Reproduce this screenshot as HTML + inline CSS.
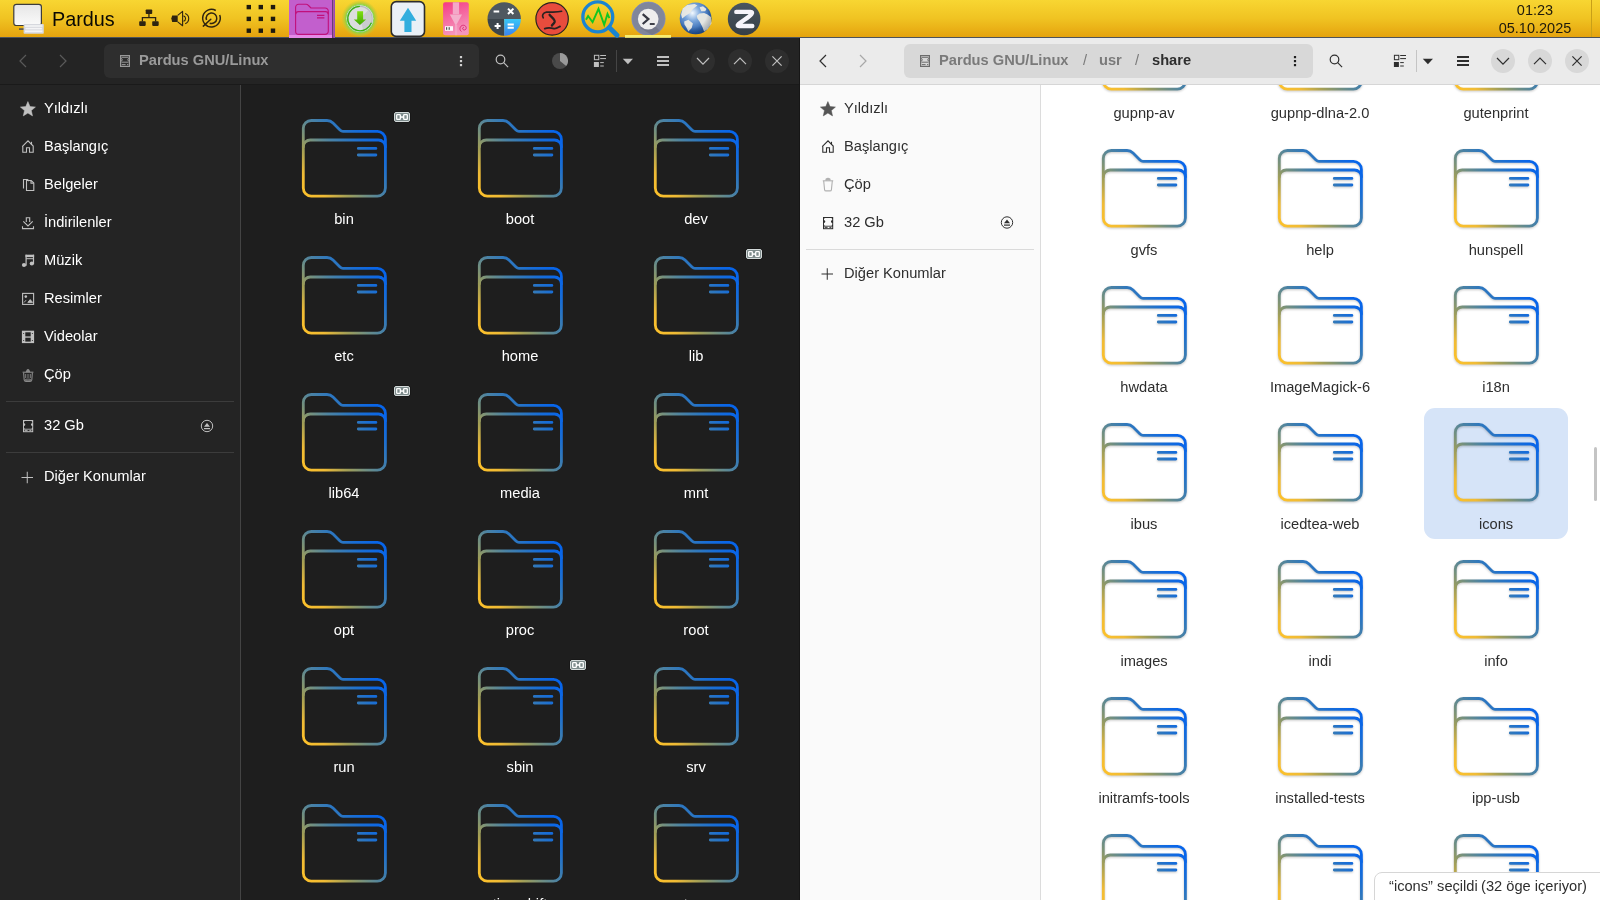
<!DOCTYPE html><html><head><meta charset="utf-8"><style>
*{box-sizing:border-box;margin:0;padding:0}
html,body{width:1600px;height:900px;overflow:hidden;font-family:"Liberation Sans",sans-serif;background:#1e1e1e;position:relative}
div,svg{position:absolute}
.t{white-space:nowrap;font-size:14.67px;line-height:18px;will-change:transform}
.lbl{width:170px;text-align:center;white-space:nowrap;font-size:14.67px;line-height:18px;will-change:transform}
.fold{width:84px;height:79px;overflow:visible}
</style></head><body>
<svg width="0" height="0" style="left:0;top:0">
<defs>
<linearGradient id="gd" gradientUnits="userSpaceOnUse" x1="0" y1="79" x2="84" y2="0">
<stop offset="0" stop-color="#ffc228"/>
<stop offset="0.15" stop-color="#f0bb35"/>
<stop offset="0.3" stop-color="#a09e58"/>
<stop offset="0.42" stop-color="#6e8e84"/>
<stop offset="0.52" stop-color="#4a82a4"/>
<stop offset="0.62" stop-color="#3078bc"/>
<stop offset="0.72" stop-color="#1a6ed4"/>
<stop offset="0.85" stop-color="#0a66e8"/>
<stop offset="1" stop-color="#0062f0"/>
</linearGradient>
<symbol id="fd" viewBox="0 0 84 79" overflow="visible">
<g fill="none" stroke="url(#gd)" stroke-width="2.8" stroke-linecap="round" stroke-linejoin="round">
<path d="M1.3 9.5A8 8 0 0 1 9.3 1.5H25C27.5 1.5 29.5 2.5 31 4L38 11C39 12 39.5 12.4 41 12.4H75.4A8 8 0 0 1 83.4 20.4V69.1A8 8 0 0 1 75.4 77.1H9.3A8 8 0 0 1 1.3 69.1Z"/>
<path d="M1.3 28A7 7 0 0 1 8.3 21H76.4A7 7 0 0 1 83.4 28"/>
<path d="M56.3 29.4H73.9M56.3 36H73.9"/>
</g>
</symbol>
</defs></svg>
<div style="left:0px;top:0px;width:1600px;height:37px;background:linear-gradient(#f8d632,#f0c322 50%,#e5a30e)"></div>
<div style="left:0px;top:37px;width:1600px;height:1px;background:#4e535a"></div>
<svg style="left:0;top:0" width="800" height="38" viewBox="0 0 800 38">
<defs>
<linearGradient id="mon" x1="0" y1="0" x2="0" y2="1"><stop offset="0" stop-color="#e6e6e6"/><stop offset="1" stop-color="#fafafa"/></linearGradient>
<radialGradient id="glow"><stop offset="0.74" stop-color="#90d040" stop-opacity="1"/><stop offset="0.86" stop-color="#b4cc38" stop-opacity="0.7"/><stop offset="1" stop-color="#c8c830" stop-opacity="0"/></radialGradient><linearGradient id="ga" x1="0" y1="0" x2="0" y2="1"><stop offset="0" stop-color="#80e010"/><stop offset="1" stop-color="#44a808"/></linearGradient>
<linearGradient id="pk" x1="0" y1="0" x2="0.3" y2="1"><stop offset="0" stop-color="#f43a84"/><stop offset="1" stop-color="#f596bc"/></linearGradient>
<radialGradient id="gl" cx="0.4" cy="0.33" r="0.72"><stop offset="0" stop-color="#f4faff"/><stop offset="0.35" stop-color="#7aa6dc"/><stop offset="0.75" stop-color="#3468b0"/><stop offset="1" stop-color="#1c4a8e"/></radialGradient><radialGradient id="gs" cx="0.4" cy="0.33" r="0.75"><stop offset="0.6" stop-color="#000" stop-opacity="0"/><stop offset="1" stop-color="#0a2a60" stop-opacity="0.35"/></radialGradient><linearGradient id="zg" x1="0" y1="0" x2="0" y2="1"><stop offset="0" stop-color="#4a5660"/><stop offset="1" stop-color="#363e46"/></linearGradient>
<linearGradient id="cb" x1="0" y1="0" x2="0" y2="1"><stop offset="0" stop-color="#38c8f8"/><stop offset="1" stop-color="#3a80f0"/></linearGradient>
</defs>
<!-- computer -->
<rect x="13.8" y="4.3" width="27.6" height="21.2" rx="2.5" fill="url(#mon)" stroke="#3c3c3c" stroke-width="1.2"/>
<rect x="19" y="28.3" width="5" height="1.6" fill="#555"/>
<rect x="23.6" y="24" width="20.2" height="9.8" rx="0.8" fill="#d6d8de"/>
<g fill="#f4f4f6"><rect x="25" y="25.2" width="17.4" height="1.6"/><rect x="25.5" y="27.8" width="16.4" height="1.6"/><rect x="25" y="30.4" width="17.4" height="1.8"/></g>
<!-- network -->
<g fill="#2e2410">
<rect x="145.7" y="9.5" width="6.5" height="4.6" rx="0.8"/>
<rect x="139.2" y="21.3" width="6.5" height="4.6" rx="0.8"/>
<rect x="152.2" y="21.3" width="6.5" height="4.6" rx="0.8"/>
</g>
<path d="M148.95 14V17.5M142.4 21.5V17.6H155.6V21.5" fill="none" stroke="#2e2410" stroke-width="1.3"/>
<!-- volume -->
<path d="M171.3 18.6L172.2 15.4H177.7V21.9H172.2Z" fill="#2e2410"/>
<path d="M177.7 15.4L182.6 11.3V25.7L177.7 21.9" fill="none" stroke="#2e2410" stroke-width="1.1" stroke-linejoin="round"/>
<path d="M183.5 15.9A2.8 2.8 0 0 1 183.5 21.3M185.2 13.4A5.6 5.6 0 0 1 185.2 23.8" fill="none" stroke="#2e2410" stroke-width="1.1"/>
<!-- idle/sync icon -->
<path d="M219.7 15.05A8.8 8.8 0 1 1 215.77 10.5" fill="none" stroke="#2e2410" stroke-width="1.5"/>
<path d="M206.52 20.01A5.3 5.3 0 1 1 209.69 23.18" fill="none" stroke="#2e2410" stroke-width="1.5"/>
<path d="M203.3 26.1L210.8 19.2" fill="none" stroke="#2e2410" stroke-width="1.5" stroke-linecap="round"/>
<!-- grid -->
<g fill="#1e1a0e">
<rect x="246.6" y="4.9" width="4.4" height="4.4"/><rect x="258.6" y="4.9" width="4.4" height="4.4"/><rect x="270.8" y="4.9" width="4.4" height="4.4"/>
<rect x="246.6" y="16.7" width="4.4" height="4.4"/><rect x="258.6" y="16.7" width="4.4" height="4.4"/><rect x="270.8" y="16.7" width="4.4" height="4.4"/>
<rect x="246.6" y="28.5" width="4.4" height="4.4"/><rect x="258.6" y="28.5" width="4.4" height="4.4"/><rect x="270.8" y="28.5" width="4.4" height="4.4"/>
</g>
<!-- active files app -->
<rect x="289" y="0" width="43" height="38" fill="#c25fcd"/>
<rect x="289" y="35" width="43" height="3" fill="#e58ae8"/>
<rect x="332" y="0" width="1.2" height="38" fill="#6a3a78"/>
<rect x="333.2" y="0" width="1.8" height="38" fill="#9a48b8"/>
<g fill="none" stroke="#c0107c" stroke-width="1.1" stroke-linejoin="round">
<path d="M295.6 7.5A3.2 3.2 0 0 1 298.8 4.3H306C307.2 4.3 307.8 4.8 308.5 5.5L311 8H325A3.2 3.2 0 0 1 328.3 11.2V31.2A3.2 3.2 0 0 1 325 34.4H298.8A3.2 3.2 0 0 1 295.6 31.2Z"/>
<path d="M295.6 14.2A2.8 2.8 0 0 1 298.4 11.6H325.4A2.8 2.8 0 0 1 328.3 14.2" stroke-width="1.3"/>
<path d="M317 15.4H324.4M317 17.9H324.4" stroke-width="1.1"/>
</g>
<!-- green download -->
<circle cx="359.9" cy="18.6" r="18.6" fill="url(#glow)"/>
<circle cx="359.9" cy="18.6" r="14" fill="#dcdde0" stroke="#7cd83a" stroke-width="0.8"/>
<clipPath id="dc"><circle cx="359.9" cy="18.6" r="11.6"/></clipPath><path clip-path="url(#dc)" d="M359.9 18.6L370.5 8L380 28L365 36Z" fill="#c6c8cc" opacity="0.8"/>
<circle cx="359.9" cy="18.6" r="12.2" fill="none" stroke="#b8babe" stroke-width="1.1"/>
<path d="M359.9 6.4A12.2 12.2 0 1 0 371.4 22.8" fill="none" stroke="#3cb414" stroke-width="1.3"/>
<path d="M357.2 11.2H363.1V19.4H366.1L359.9 24.9L353.8 19.4H357.2Z" fill="url(#ga)"/>
<!-- up arrow box -->
<rect x="391.3" y="1.6" width="33.2" height="34.8" rx="5" fill="#eaf0f6" stroke="#2c2c2c" stroke-width="1.6"/>
<path d="M408 7.8L416.2 20.8H411.5V32H404.4V20.8H399.8Z" fill="#32aede"/>
<!-- pink package -->
<rect x="443.1" y="2.3" width="25.7" height="32.9" rx="2" fill="url(#pk)"/>
<rect x="452.8" y="2.3" width="6.3" height="12" fill="#f4a8c8"/>
<path d="M449.8 14.6H462L455.9 25.7Z" fill="#f4b0cc"/>
<rect x="455" y="25" width="2.3" height="10.2" fill="#f4a8c8" opacity="0.8"/>
<rect x="445" y="26.2" width="8" height="4.6" fill="#fafafa"/>
<g fill="#555"><rect x="446" y="27.2" width="1.2" height="2.6"/><rect x="448.6" y="27.2" width="1.2" height="2.6"/></g>
<path d="M461.5 31.5C459.5 30.5 459.3 27 461.8 25.6C464 24.5 466.5 26 466.2 28.3C466 30 464 30.5 463 29.5C462 28.5 463 27 464 27.6" fill="none" stroke="#d4186a" stroke-width="0.8"/>
<!-- calculator -->
<clipPath id="cc"><circle cx="504.2" cy="19" r="16.7"/></clipPath>
<g clip-path="url(#cc)">
<rect x="487" y="2" width="35" height="17" fill="#4f5860"/>
<rect x="487" y="19" width="17.2" height="17" fill="#3c454c"/>
<rect x="504.2" y="19" width="17.8" height="17" fill="url(#cb)"/>
</g>
<g stroke="#fff" stroke-width="2" fill="none">
<path d="M493.6 11.5H499.2M508 8.6L513.4 14M513.4 8.6L508 14M494.6 26.1H500.6M497.6 23.1V29.1M507.6 24.4H513.8M507.6 27.8H513.8"/>
</g>
<!-- red T -->
<circle cx="552.1" cy="18.9" r="16.2" fill="#e84c3d" stroke="#2a2220" stroke-width="1.2"/>
<g fill="none" stroke="#2a2220" stroke-linecap="round">
<path d="M543.2 17.8C541.6 15.5 543 12.8 546.5 12.2C551 11.7 556.5 12.6 561.6 11.3" stroke-width="1.7"/>
<path d="M549.6 14.8C551 17 555.5 19.5 554.6 22C554 23.5 552.6 24.5 551.9 25.5" stroke-width="2.3"/>
<path d="M544.8 28.6C548 27.4 551 27.8 554 28.6C556 29 558 27.6 560 26.4" stroke-width="1.9"/>
</g>
<!-- magnifier -->
<circle cx="597.8" cy="16.9" r="14.95" fill="none" stroke="#1a84d2" stroke-width="3.3"/>
<path d="M609.5 27.8L617 35.3" stroke="#1a84d2" stroke-width="4.8" stroke-linecap="round"/>
<path d="M586 19.8L588.1 16L592.6 22.2L598.5 8.9L604.2 24.7L607.5 13.9L609.4 18.1" fill="none" stroke="#12c622" stroke-width="1.9" stroke-linejoin="miter"/>
<!-- terminal -->
<circle cx="648.5" cy="18.7" r="16.6" fill="#80869a" stroke="#7886c4" stroke-width="0.8"/>
<path d="M648.2 19.1L660 31L652 35L640 28Z" fill="#6c7080" opacity="0.6"/>
<circle cx="648.2" cy="19.1" r="10.3" fill="#eeeeee"/>
<path d="M642.7 14.2L648.4 19.1L642.7 24" fill="none" stroke="#363842" stroke-width="2.2"/>
<path d="M649.8 24H654.7" stroke="#363842" stroke-width="1.9"/>
<rect x="625" y="35" width="46" height="2.8" fill="#f8ee70"/>
<!-- globe -->
<circle cx="695.6" cy="18.4" r="15.9" fill="url(#gl)"/>
<g fill="#ecebe4" opacity="0.95"><polygon points="681.1,14.6 682.7,8.4 687.2,5.1 694.6,3.9 697.4,5.6 692.9,9.0 690.1,12.9 685.6,15.7 682.2,18.6"/><polygon points="684.2,21.4 688.4,19.7 692.9,23.6 691.7,28.1 688.4,31.5 686.1,27.0 684.4,24.2"/><polygon points="696.8,15.7 699.6,13.5 704.1,12.9 707.5,14.6 710.9,16.9 711.4,23.6 707.5,29.2 704.1,31.5 702.4,27.0 699.6,21.4 697.4,18.6"/><polygon points="699.6,7.3 703.0,6.2 706.4,9.0 705.2,11.2 701.3,11.2"/></g>
<circle cx="695.6" cy="18.4" r="15.9" fill="url(#gs)"/>
<!-- Z -->
<circle cx="744.1" cy="19" r="16.3" fill="url(#zg)"/>
<path d="M736.3 11.9H750.5Q753 11.9 751.5 14C749 17.5 742.5 20.5 738.5 24.2Q736.6 26 739.2 26H752.3" fill="none" stroke="#f6f4fa" stroke-width="4.4" stroke-linecap="round" stroke-linejoin="round"/>
</svg>
<div class="t" style="left:52px;top:6.6px;font-size:19.8px;line-height:24px;color:#0a0804">Pardus</div>
<div class="t" style="left:1485px;width:100px;text-align:center;top:1px;font-size:14.5px;line-height:18px;color:#1e1a0c">01:23</div>
<div class="t" style="left:1485px;width:100px;text-align:center;top:19px;font-size:14.5px;line-height:18px;color:#1e1a0c">05.10.2025</div>
<div style="left:1591px;top:0px;width:1px;height:37px;background:#c8a018"></div>
<div style="left:0px;top:38px;width:800px;height:46px;background:#242424"></div>
<div style="left:0px;top:84px;width:800px;height:1px;background:#1a1a1a"></div>
<div style="left:0px;top:85px;width:240px;height:815px;background:#242424"></div>
<div style="left:240px;top:85px;width:1px;height:815px;background:#444444"></div>
<div style="left:241px;top:85px;width:559px;height:815px;background:#1e1e1e"></div>
<div style="left:104px;top:44px;width:375px;height:34px;background:#2e2e2e;border-radius:6px"></div>
<div class="t" style="left:139px;top:51.0px;line-height:18px;font-weight:bold;color:#9a9a9a">Pardus GNU/Linux</div>
<div class="t" style="left:44px;top:99.0px;line-height:18px;color:#ffffff">Yıldızlı</div>
<div class="t" style="left:44px;top:137.0px;line-height:18px;color:#ffffff">Başlangıç</div>
<div class="t" style="left:44px;top:175.0px;line-height:18px;color:#ffffff">Belgeler</div>
<div class="t" style="left:44px;top:213.0px;line-height:18px;color:#ffffff">İndirilenler</div>
<div class="t" style="left:44px;top:251.0px;line-height:18px;color:#ffffff">Müzik</div>
<div class="t" style="left:44px;top:289.0px;line-height:18px;color:#ffffff">Resimler</div>
<div class="t" style="left:44px;top:327.0px;line-height:18px;color:#ffffff">Videolar</div>
<div class="t" style="left:44px;top:365.0px;line-height:18px;color:#ffffff">Çöp</div>
<div style="left:6px;top:401px;width:228px;height:1px;background:#3c3c3c"></div>
<div class="t" style="left:44px;top:416.0px;line-height:18px;color:#ffffff">32 Gb</div>
<div style="left:6px;top:452px;width:228px;height:1px;background:#3c3c3c"></div>
<div class="t" style="left:44px;top:467.0px;line-height:18px;color:#ffffff">Diğer Konumlar</div>
<div style="left:800px;top:38px;width:800px;height:46px;background:#ebebeb"></div>
<div style="left:800px;top:84px;width:800px;height:1px;background:#d6d6d6"></div>
<div style="left:800px;top:85px;width:240px;height:815px;background:#fafafa"></div>
<div style="left:1040px;top:85px;width:1px;height:815px;background:#dcdcdc"></div>
<div style="left:1041px;top:85px;width:559px;height:815px;background:#ffffff"></div>
<div style="left:904px;top:44px;width:409px;height:34px;background:#d8d8d8;border-radius:6px"></div>
<div class="t" style="left:939px;top:51.0px;line-height:18px;font-weight:bold;color:#7a7a7a">Pardus GNU/Linux</div>
<div class="t" style="left:844px;top:99.0px;line-height:18px;color:#2e2e2e">Yıldızlı</div>
<div class="t" style="left:844px;top:137.0px;line-height:18px;color:#2e2e2e">Başlangıç</div>
<div class="t" style="left:844px;top:175.0px;line-height:18px;color:#2e2e2e">Çöp</div>
<div class="t" style="left:844px;top:213.0px;line-height:18px;color:#2e2e2e">32 Gb</div>
<div class="t" style="left:1083px;top:51.0px;line-height:18px;color:#7a7a7a">/</div>
<div class="t" style="left:1099px;top:51.0px;line-height:18px;color:#7a7a7a;font-weight:bold">usr</div>
<div class="t" style="left:1135px;top:51.0px;line-height:18px;color:#7a7a7a">/</div>
<div class="t" style="left:1152px;top:51.0px;line-height:18px;color:#2e2e2e;font-weight:bold">share</div>
<div style="left:806px;top:249px;width:228px;height:1px;background:#dadada"></div>
<div class="t" style="left:844px;top:264.0px;line-height:18px;color:#2e2e2e">Diğer Konumlar</div>
<svg style="left:0px;top:0" width="800" height="900" viewBox="0 0 800 900"><path d="M26 55L20 61L26 67" fill="none" stroke="#5a5a5a" stroke-width="1.2"/><path d="M60 55L66 61L60 67" fill="none" stroke="#5a5a5a" stroke-width="1.2"/><g transform="translate(120,55)"><rect x="0.6" y="0.6" width="8.8" height="10.8" fill="none" stroke="#9a9a9a" stroke-width="1.2"/><path d="M1.5 2.3H8.5M1.5 7.2H8.5" stroke="#9a9a9a" stroke-width="1"/><path d="M1 3.5A1.2 1.2 0 0 1 1 6M9 3.5A1.2 1.2 0 0 0 9 6" fill="none" stroke="#9a9a9a" stroke-width="1"/><path d="M1.8 9.6H5.6M7 9.6H8.3" stroke="#9a9a9a" stroke-width="1"/></g><rect x="459.9" y="56.0" width="2.2" height="2.2" fill="#d0d0d0"/><rect x="459.9" y="60.0" width="2.2" height="2.2" fill="#d0d0d0"/><rect x="459.9" y="63.99999999999999" width="2.2" height="2.2" fill="#d0d0d0"/><circle cx="500.5" cy="59.5" r="4.3" fill="none" stroke="#c0c0c0" stroke-width="1.2"/><path d="M503.7 62.7L508.1 67.1" stroke="#c0c0c0" stroke-width="1.2"/><circle cx="560" cy="61" r="8" fill="#4a4a4a"/><path d="M560 61V53A8 8 0 0 1 566.2 66Z" fill="#9a9a9a"/><rect x="594.4" y="55.3" width="4.4" height="4.4" fill="none" stroke="#c0c0c0" stroke-width="1"/><rect x="593.9" y="62" width="5" height="5" fill="#c0c0c0"/><path d="M600.2 55.5H606M600.2 58.6H606M600.2 62.6H603.8M600.2 66H603.8" stroke="#c0c0c0" stroke-width="1"/><rect x="616" y="50" width="1" height="22" fill="#454545"/><path d="M622.8 58.8H633L627.9 64.3Z" fill="#c0c0c0"/><path d="M657 57H669M657 61H669M657 65H669" stroke="#c0c0c0" stroke-width="2"/><circle cx="703" cy="61" r="12" fill="#2e2e2e"/><circle cx="740" cy="61" r="12" fill="#2e2e2e"/><circle cx="777" cy="61" r="12" fill="#2e2e2e"/><path d="M697 58L703 64.2L709 58" fill="none" stroke="#c0c0c0" stroke-width="1.2"/><path d="M734 64.2L740 58L746 64.2" fill="none" stroke="#c0c0c0" stroke-width="1.2"/><path d="M772.4 56.4L781.6 65.6M781.6 56.4L772.4 65.6" fill="none" stroke="#c0c0c0" stroke-width="1.2"/><polygon points="27.90,101.60 30.02,106.59 35.41,107.06 31.32,110.61 32.54,115.89 27.90,113.10 23.26,115.89 24.48,110.61 20.39,107.06 25.78,106.59" fill="#c0c0c0" stroke="#c0c0c0" stroke-width="0.5" stroke-linejoin="round"/><g fill="none" stroke="#c0c0c0" stroke-width="1.1" transform="translate(21.5,140)"><path d="M0.7 6.6L6.5 0.8L11.7 6V12.2H8V7.8H5V12.2H1.3V6.6"/><path d="M10 1.8V4.8"/></g><g fill="none" stroke="#c0c0c0" stroke-width="1.1"><path d="M23.5 188.5V179.5H27.5L29 181"/><path d="M26.5 190.5V180.5H31.2L33.8 183.1V190.5Z"/><path d="M31 180.8V183.3H33.6" /></g><g fill="none" stroke="#c0c0c0" stroke-width="1.1"><path d="M26.3 222V217.7H29.7V222"/><path d="M23.3 221.3L28 226L32.7 221.3"/><path d="M22.5 226.2V228.6H33.5V226.2"/></g><g fill="#c0c0c0"><rect x="25.5" y="254.7" width="8.6" height="2.4"/><rect x="25.5" y="254.7" width="1.2" height="11"/><rect x="32.9" y="254.7" width="1.2" height="9.5"/><rect x="26" y="258.2" width="7.5" height="1"/><circle cx="24" cy="265" r="2.1"/><circle cx="31.8" cy="263.5" r="2.1"/></g><g><rect x="22.6" y="293.4" width="11" height="11" fill="none" stroke="#c0c0c0" stroke-width="1.1"/><circle cx="25.8" cy="296.6" r="1.3" fill="#c0c0c0"/><path d="M24 302.5L26 300.2M27.8 302.4L30.2 299.6L32.6 302.4Z" fill="#c0c0c0" stroke="#c0c0c0" stroke-width="0.9"/></g><g><rect x="21.9" y="330.7" width="12.2" height="12.4" fill="#c0c0c0"/><rect x="25.3" y="332.3" width="5.4" height="4.1" fill="#242424"/><rect x="25.3" y="337.7" width="5.4" height="3.9" fill="#242424"/><g fill="#242424"><rect x="23.2" y="333" width="0.9" height="0.9"/><rect x="31.9" y="333" width="0.9" height="0.9"/><rect x="23.2" y="340" width="0.9" height="0.9"/><rect x="31.9" y="340" width="0.9" height="0.9"/></g></g><g fill="none" stroke="#8a8a8a" stroke-width="1.1"><path d="M22.6 372.2H33.4"/><path d="M26.4 371.6Q28 367.4 29.6 371.6Z" fill="#8a8a8a"/><path d="M23.6 372.6L24.2 380Q24.4 381.4 26 381.4H30Q31.6 381.4 31.8 380L32.4 372.6"/><path d="M25.7 374V378M28 374V378M30.3 374V378" stroke-width="0.9"/><ellipse cx="28" cy="380" rx="3" ry="0.9" stroke-width="0.9"/></g><g transform="translate(23,420)"><rect x="0" y="0" width="10.2" height="12.2" fill="#c0c0c0"/><path d="M2.2 1.1H8A1.2 1.2 0 0 1 9.2 2.3V3.3A1.3 1.3 0 0 0 9.2 5.9V7.5A1.2 1.2 0 0 1 8 8.7H2.2A1.2 1.2 0 0 1 1 7.5V5.9A1.3 1.3 0 0 0 1 3.3V2.3A1.2 1.2 0 0 1 2.2 1.1Z" fill="#242424"/><rect x="1" y="9.6" width="8.2" height="1.6" fill="#242424"/><path d="M1.6 10.4H4.6M6.4 10.4H8.4" stroke="#c0c0c0" stroke-width="0.9"/></g><circle cx="207" cy="426" r="5.7" fill="none" stroke="#c0c0c0" stroke-width="1"/><path d="M204 426.8L207 423L210 426.8Z" fill="#c0c0c0"/><rect x="204" y="428" width="6" height="1.2" fill="#c0c0c0"/><path d="M21.5 477.5H33M27.25 471.75V483.25" stroke="#c0c0c0" stroke-width="1"/></svg>
<svg style="left:800px;top:0" width="800" height="900" viewBox="0 0 800 900"><path d="M26 55L20 61L26 67" fill="none" stroke="#2e2e2e" stroke-width="1.2"/><path d="M60 55L66 61L60 67" fill="none" stroke="#a8a8a8" stroke-width="1.2"/><g transform="translate(120,55)"><rect x="0.6" y="0.6" width="8.8" height="10.8" fill="none" stroke="#6c6c6c" stroke-width="1.2"/><path d="M1.5 2.3H8.5M1.5 7.2H8.5" stroke="#6c6c6c" stroke-width="1"/><path d="M1 3.5A1.2 1.2 0 0 1 1 6M9 3.5A1.2 1.2 0 0 0 9 6" fill="none" stroke="#6c6c6c" stroke-width="1"/><path d="M1.8 9.6H5.6M7 9.6H8.3" stroke="#6c6c6c" stroke-width="1"/></g><rect x="493.9" y="56.0" width="2.2" height="2.2" fill="#1e1e1e"/><rect x="493.9" y="60.0" width="2.2" height="2.2" fill="#1e1e1e"/><rect x="493.9" y="63.99999999999999" width="2.2" height="2.2" fill="#1e1e1e"/><circle cx="534.5" cy="59.5" r="4.3" fill="none" stroke="#2e2e2e" stroke-width="1.2"/><path d="M537.7 62.7L542.1 67.1" stroke="#2e2e2e" stroke-width="1.2"/><rect x="594.4" y="55.3" width="4.4" height="4.4" fill="none" stroke="#2e2e2e" stroke-width="1"/><rect x="593.9" y="62" width="5" height="5" fill="#2e2e2e"/><path d="M600.2 55.5H606M600.2 58.6H606M600.2 62.6H603.8M600.2 66H603.8" stroke="#2e2e2e" stroke-width="1"/><rect x="616" y="50" width="1" height="22" fill="#c4c4c4"/><path d="M622.8 58.8H633L627.9 64.3Z" fill="#2e2e2e"/><path d="M657 57H669M657 61H669M657 65H669" stroke="#2e2e2e" stroke-width="2"/><circle cx="703" cy="61" r="12" fill="#d8d8d8"/><circle cx="740" cy="61" r="12" fill="#d8d8d8"/><circle cx="777" cy="61" r="12" fill="#d8d8d8"/><path d="M697 58L703 64.2L709 58" fill="none" stroke="#2e2e2e" stroke-width="1.2"/><path d="M734 64.2L740 58L746 64.2" fill="none" stroke="#2e2e2e" stroke-width="1.2"/><path d="M772.4 56.4L781.6 65.6M781.6 56.4L772.4 65.6" fill="none" stroke="#2e2e2e" stroke-width="1.2"/><polygon points="27.90,101.60 30.02,106.59 35.41,107.06 31.32,110.61 32.54,115.89 27.90,113.10 23.26,115.89 24.48,110.61 20.39,107.06 25.78,106.59" fill="#555555" stroke="#555555" stroke-width="0.5" stroke-linejoin="round"/><g fill="none" stroke="#2e2e2e" stroke-width="1.1" transform="translate(21.5,140)"><path d="M0.7 6.6L6.5 0.8L11.7 6V12.2H8V7.8H5V12.2H1.3V6.6"/><path d="M10 1.8V4.8"/></g><g fill="none" stroke="#b0b0b0" stroke-width="1.1" transform="translate(22,177.5)"><path d="M0.8 3.3H11.2"/><path d="M4 3V1.6Q6 0.2 8 1.6V3" fill="#b0b0b0"/><path d="M1.7 3.5L2.6 12.3Q2.8 13.4 4 13.4H8Q9.2 13.4 9.4 12.3L10.3 3.5"/></g><g transform="translate(23,217)"><rect x="0" y="0" width="10.2" height="12.2" fill="#2e2e2e"/><path d="M2.2 1.1H8A1.2 1.2 0 0 1 9.2 2.3V3.3A1.3 1.3 0 0 0 9.2 5.9V7.5A1.2 1.2 0 0 1 8 8.7H2.2A1.2 1.2 0 0 1 1 7.5V5.9A1.3 1.3 0 0 0 1 3.3V2.3A1.2 1.2 0 0 1 2.2 1.1Z" fill="#fafafa"/><rect x="1" y="9.6" width="8.2" height="1.6" fill="#fafafa"/><path d="M1.6 10.4H4.6M6.4 10.4H8.4" stroke="#2e2e2e" stroke-width="0.9"/></g><circle cx="207" cy="222.5" r="5.7" fill="none" stroke="#2e2e2e" stroke-width="1"/><path d="M204 223.3L207 219.5L210 223.3Z" fill="#2e2e2e"/><rect x="204" y="224.5" width="6" height="1.2" fill="#2e2e2e"/><path d="M21.5 274H33M27.25 268.25V279.75" stroke="#2e2e2e" stroke-width="1"/></svg>
<div style="left:241px;top:85px;width:559px;height:815px;overflow:hidden">
<svg style="left:153px;top:27px;overflow:visible" width="16" height="10" viewBox="0 0 16 10"><rect x="-0.5" y="-0.5" width="17" height="11" rx="2" fill="#000" opacity="0.35"/><rect x="0.5" y="0.5" width="15" height="9" rx="1.5" fill="#7e8c8c" stroke="#d4dada" stroke-width="1"/><rect x="2.7" y="2.6" width="3.6" height="4.8" rx="0.6" fill="none" stroke="#fff" stroke-width="1.3"/><rect x="9.7" y="2.6" width="3.6" height="4.8" rx="0.6" fill="none" stroke="#fff" stroke-width="1.3"/><rect x="6" y="4.3" width="4" height="1.5" fill="#fff"/></svg>
<svg style="left:505px;top:164px;overflow:visible" width="16" height="10" viewBox="0 0 16 10"><rect x="-0.5" y="-0.5" width="17" height="11" rx="2" fill="#000" opacity="0.35"/><rect x="0.5" y="0.5" width="15" height="9" rx="1.5" fill="#7e8c8c" stroke="#d4dada" stroke-width="1"/><rect x="2.7" y="2.6" width="3.6" height="4.8" rx="0.6" fill="none" stroke="#fff" stroke-width="1.3"/><rect x="9.7" y="2.6" width="3.6" height="4.8" rx="0.6" fill="none" stroke="#fff" stroke-width="1.3"/><rect x="6" y="4.3" width="4" height="1.5" fill="#fff"/></svg>
<svg style="left:153px;top:301px;overflow:visible" width="16" height="10" viewBox="0 0 16 10"><rect x="-0.5" y="-0.5" width="17" height="11" rx="2" fill="#000" opacity="0.35"/><rect x="0.5" y="0.5" width="15" height="9" rx="1.5" fill="#7e8c8c" stroke="#d4dada" stroke-width="1"/><rect x="2.7" y="2.6" width="3.6" height="4.8" rx="0.6" fill="none" stroke="#fff" stroke-width="1.3"/><rect x="9.7" y="2.6" width="3.6" height="4.8" rx="0.6" fill="none" stroke="#fff" stroke-width="1.3"/><rect x="6" y="4.3" width="4" height="1.5" fill="#fff"/></svg>
<svg style="left:329px;top:575px;overflow:visible" width="16" height="10" viewBox="0 0 16 10"><rect x="-0.5" y="-0.5" width="17" height="11" rx="2" fill="#000" opacity="0.35"/><rect x="0.5" y="0.5" width="15" height="9" rx="1.5" fill="#7e8c8c" stroke="#d4dada" stroke-width="1"/><rect x="2.7" y="2.6" width="3.6" height="4.8" rx="0.6" fill="none" stroke="#fff" stroke-width="1.3"/><rect x="9.7" y="2.6" width="3.6" height="4.8" rx="0.6" fill="none" stroke="#fff" stroke-width="1.3"/><rect x="6" y="4.3" width="4" height="1.5" fill="#fff"/></svg>
<svg class="fold" style="left:60.69999999999999px;top:34px;" viewBox="0 0 84 79"><use href="#fd"/></svg>
<div class="lbl" style="left:18px;top:125px;color:#fff">bin</div>
<svg class="fold" style="left:236.7px;top:34px;" viewBox="0 0 84 79"><use href="#fd"/></svg>
<div class="lbl" style="left:194px;top:125px;color:#fff">boot</div>
<svg class="fold" style="left:412.70000000000005px;top:34px;" viewBox="0 0 84 79"><use href="#fd"/></svg>
<div class="lbl" style="left:370px;top:125px;color:#fff">dev</div>
<svg class="fold" style="left:60.69999999999999px;top:171px;" viewBox="0 0 84 79"><use href="#fd"/></svg>
<div class="lbl" style="left:18px;top:262px;color:#fff">etc</div>
<svg class="fold" style="left:236.7px;top:171px;" viewBox="0 0 84 79"><use href="#fd"/></svg>
<div class="lbl" style="left:194px;top:262px;color:#fff">home</div>
<svg class="fold" style="left:412.70000000000005px;top:171px;" viewBox="0 0 84 79"><use href="#fd"/></svg>
<div class="lbl" style="left:370px;top:262px;color:#fff">lib</div>
<svg class="fold" style="left:60.69999999999999px;top:308px;" viewBox="0 0 84 79"><use href="#fd"/></svg>
<div class="lbl" style="left:18px;top:399px;color:#fff">lib64</div>
<svg class="fold" style="left:236.7px;top:308px;" viewBox="0 0 84 79"><use href="#fd"/></svg>
<div class="lbl" style="left:194px;top:399px;color:#fff">media</div>
<svg class="fold" style="left:412.70000000000005px;top:308px;" viewBox="0 0 84 79"><use href="#fd"/></svg>
<div class="lbl" style="left:370px;top:399px;color:#fff">mnt</div>
<svg class="fold" style="left:60.69999999999999px;top:445px;" viewBox="0 0 84 79"><use href="#fd"/></svg>
<div class="lbl" style="left:18px;top:536px;color:#fff">opt</div>
<svg class="fold" style="left:236.7px;top:445px;" viewBox="0 0 84 79"><use href="#fd"/></svg>
<div class="lbl" style="left:194px;top:536px;color:#fff">proc</div>
<svg class="fold" style="left:412.70000000000005px;top:445px;" viewBox="0 0 84 79"><use href="#fd"/></svg>
<div class="lbl" style="left:370px;top:536px;color:#fff">root</div>
<svg class="fold" style="left:60.69999999999999px;top:582px;" viewBox="0 0 84 79"><use href="#fd"/></svg>
<div class="lbl" style="left:18px;top:673px;color:#fff">run</div>
<svg class="fold" style="left:236.7px;top:582px;" viewBox="0 0 84 79"><use href="#fd"/></svg>
<div class="lbl" style="left:194px;top:673px;color:#fff">sbin</div>
<svg class="fold" style="left:412.70000000000005px;top:582px;" viewBox="0 0 84 79"><use href="#fd"/></svg>
<div class="lbl" style="left:370px;top:673px;color:#fff">srv</div>
<svg class="fold" style="left:60.69999999999999px;top:719px;" viewBox="0 0 84 79"><use href="#fd"/></svg>
<div class="lbl" style="left:18px;top:810px;color:#fff">sys</div>
<svg class="fold" style="left:236.7px;top:719px;" viewBox="0 0 84 79"><use href="#fd"/></svg>
<div class="lbl" style="left:194px;top:810px;color:#fff">timeshift</div>
<svg class="fold" style="left:412.70000000000005px;top:719px;" viewBox="0 0 84 79"><use href="#fd"/></svg>
<div class="lbl" style="left:370px;top:810px;color:#fff">tmp</div>
</div>
<div style="left:799px;top:38px;width:1px;height:862px;background:#161616"></div>
<div style="left:1041px;top:85px;width:559px;height:815px;overflow:hidden">
<svg class="fold" style="left:60.700000000000045px;top:-73px;filter:drop-shadow(0 1px 1px rgba(0,0,0,0.22));" viewBox="0 0 84 79"><use href="#fd"/></svg>
<div class="lbl" style="left:18px;top:19px;color:#2e2e2e">gupnp-av</div>
<svg class="fold" style="left:236.70000000000005px;top:-73px;filter:drop-shadow(0 1px 1px rgba(0,0,0,0.22));" viewBox="0 0 84 79"><use href="#fd"/></svg>
<div class="lbl" style="left:194px;top:19px;color:#2e2e2e">gupnp-dlna-2.0</div>
<svg class="fold" style="left:412.70000000000005px;top:-73px;filter:drop-shadow(0 1px 1px rgba(0,0,0,0.22));" viewBox="0 0 84 79"><use href="#fd"/></svg>
<div class="lbl" style="left:370px;top:19px;color:#2e2e2e">gutenprint</div>
<svg class="fold" style="left:60.700000000000045px;top:64px;filter:drop-shadow(0 1px 1px rgba(0,0,0,0.22));" viewBox="0 0 84 79"><use href="#fd"/></svg>
<div class="lbl" style="left:18px;top:156px;color:#2e2e2e">gvfs</div>
<svg class="fold" style="left:236.70000000000005px;top:64px;filter:drop-shadow(0 1px 1px rgba(0,0,0,0.22));" viewBox="0 0 84 79"><use href="#fd"/></svg>
<div class="lbl" style="left:194px;top:156px;color:#2e2e2e">help</div>
<svg class="fold" style="left:412.70000000000005px;top:64px;filter:drop-shadow(0 1px 1px rgba(0,0,0,0.22));" viewBox="0 0 84 79"><use href="#fd"/></svg>
<div class="lbl" style="left:370px;top:156px;color:#2e2e2e">hunspell</div>
<svg class="fold" style="left:60.700000000000045px;top:201px;filter:drop-shadow(0 1px 1px rgba(0,0,0,0.22));" viewBox="0 0 84 79"><use href="#fd"/></svg>
<div class="lbl" style="left:18px;top:293px;color:#2e2e2e">hwdata</div>
<svg class="fold" style="left:236.70000000000005px;top:201px;filter:drop-shadow(0 1px 1px rgba(0,0,0,0.22));" viewBox="0 0 84 79"><use href="#fd"/></svg>
<div class="lbl" style="left:194px;top:293px;color:#2e2e2e">ImageMagick-6</div>
<svg class="fold" style="left:412.70000000000005px;top:201px;filter:drop-shadow(0 1px 1px rgba(0,0,0,0.22));" viewBox="0 0 84 79"><use href="#fd"/></svg>
<div class="lbl" style="left:370px;top:293px;color:#2e2e2e">i18n</div>
<svg class="fold" style="left:60.700000000000045px;top:338px;filter:drop-shadow(0 1px 1px rgba(0,0,0,0.22));" viewBox="0 0 84 79"><use href="#fd"/></svg>
<div class="lbl" style="left:18px;top:430px;color:#2e2e2e">ibus</div>
<svg class="fold" style="left:236.70000000000005px;top:338px;filter:drop-shadow(0 1px 1px rgba(0,0,0,0.22));" viewBox="0 0 84 79"><use href="#fd"/></svg>
<div class="lbl" style="left:194px;top:430px;color:#2e2e2e">icedtea-web</div>
<div style="left:383px;top:323px;width:144px;height:131px;background:#d6e4f8;border-radius:11px"></div>
<svg class="fold" style="left:412.70000000000005px;top:338px;filter:drop-shadow(0 1px 1px rgba(0,0,0,0.22));" viewBox="0 0 84 79"><use href="#fd"/></svg>
<div class="lbl" style="left:370px;top:430px;color:#2e2e2e">icons</div>
<svg class="fold" style="left:60.700000000000045px;top:475px;filter:drop-shadow(0 1px 1px rgba(0,0,0,0.22));" viewBox="0 0 84 79"><use href="#fd"/></svg>
<div class="lbl" style="left:18px;top:567px;color:#2e2e2e">images</div>
<svg class="fold" style="left:236.70000000000005px;top:475px;filter:drop-shadow(0 1px 1px rgba(0,0,0,0.22));" viewBox="0 0 84 79"><use href="#fd"/></svg>
<div class="lbl" style="left:194px;top:567px;color:#2e2e2e">indi</div>
<svg class="fold" style="left:412.70000000000005px;top:475px;filter:drop-shadow(0 1px 1px rgba(0,0,0,0.22));" viewBox="0 0 84 79"><use href="#fd"/></svg>
<div class="lbl" style="left:370px;top:567px;color:#2e2e2e">info</div>
<svg class="fold" style="left:60.700000000000045px;top:612px;filter:drop-shadow(0 1px 1px rgba(0,0,0,0.22));" viewBox="0 0 84 79"><use href="#fd"/></svg>
<div class="lbl" style="left:18px;top:704px;color:#2e2e2e">initramfs-tools</div>
<svg class="fold" style="left:236.70000000000005px;top:612px;filter:drop-shadow(0 1px 1px rgba(0,0,0,0.22));" viewBox="0 0 84 79"><use href="#fd"/></svg>
<div class="lbl" style="left:194px;top:704px;color:#2e2e2e">installed-tests</div>
<svg class="fold" style="left:412.70000000000005px;top:612px;filter:drop-shadow(0 1px 1px rgba(0,0,0,0.22));" viewBox="0 0 84 79"><use href="#fd"/></svg>
<div class="lbl" style="left:370px;top:704px;color:#2e2e2e">ipp-usb</div>
<svg class="fold" style="left:60.700000000000045px;top:749px;filter:drop-shadow(0 1px 1px rgba(0,0,0,0.22));" viewBox="0 0 84 79"><use href="#fd"/></svg>
<svg class="fold" style="left:236.70000000000005px;top:749px;filter:drop-shadow(0 1px 1px rgba(0,0,0,0.22));" viewBox="0 0 84 79"><use href="#fd"/></svg>
<svg class="fold" style="left:412.70000000000005px;top:749px;filter:drop-shadow(0 1px 1px rgba(0,0,0,0.22));" viewBox="0 0 84 79"><use href="#fd"/></svg>
</div>
<div style="left:1373.5px;top:872.3px;width:240px;height:40px;background:#fff;border:1px solid #d6d6d6;border-top-left-radius:8px"></div>
<div class="t" style="left:1389px;top:877px;color:#2e2e2e">“icons” seçildi</div>
<div class="t" style="left:1481px;top:877px;color:#2e2e2e">(32 öge içeriyor)</div>
<div style="left:1594px;top:447px;width:3px;height:54px;background:#c4c4c4;border-radius:2px"></div>
</body></html>
